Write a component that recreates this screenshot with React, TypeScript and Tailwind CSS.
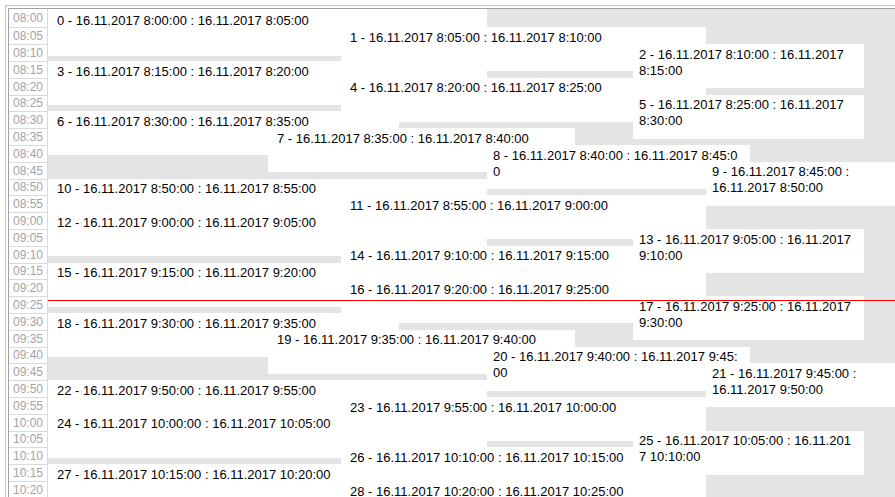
import React from "react";

const ROW = 16.8;
const TOP0 = 1.6;

type Col = { left: number; width: number; pl: number; z: number };
const A: Col = { left: 0, width: 439, pl: 9, z: 1 };
const B: Col = { left: 293, width: 365, pl: 9, z: 1 };
const C: Col = { left: 585, width: 231, pl: 6, z: 2 };
const D0: Col = { left: 0, width: 351, pl: 9, z: 1 };
const D1: Col = { left: 220, width: 307, pl: 9, z: 1 };
const D2: Col = { left: 439, width: 263, pl: 6, z: 1 };
const D3: Col = { left: 658, width: 206, pl: 6, z: 1 };

const events: { col: Col; lines: string[] }[] = [
  { col: A, lines: ["0 - 16.11.2017 8:00:00 : 16.11.2017 8:05:00"] },
  { col: B, lines: ["1 - 16.11.2017 8:05:00 : 16.11.2017 8:10:00"] },
  { col: C, lines: ["2 - 16.11.2017 8:10:00 : 16.11.2017", "8:15:00"] },
  { col: A, lines: ["3 - 16.11.2017 8:15:00 : 16.11.2017 8:20:00"] },
  { col: B, lines: ["4 - 16.11.2017 8:20:00 : 16.11.2017 8:25:00"] },
  { col: C, lines: ["5 - 16.11.2017 8:25:00 : 16.11.2017", "8:30:00"] },
  { col: D0, lines: ["6 - 16.11.2017 8:30:00 : 16.11.2017 8:35:00"] },
  { col: D1, lines: ["7 - 16.11.2017 8:35:00 : 16.11.2017 8:40:00"] },
  { col: D2, lines: ["8 - 16.11.2017 8:40:00 : 16.11.2017 8:45:0", "0"] },
  { col: D3, lines: ["9 - 16.11.2017 8:45:00 :", "16.11.2017 8:50:00"] },
  { col: A, lines: ["10 - 16.11.2017 8:50:00 : 16.11.2017 8:55:00"] },
  { col: B, lines: ["11 - 16.11.2017 8:55:00 : 16.11.2017 9:00:00"] },
  { col: A, lines: ["12 - 16.11.2017 9:00:00 : 16.11.2017 9:05:00"] },
  { col: C, lines: ["13 - 16.11.2017 9:05:00 : 16.11.2017", "9:10:00"] },
  { col: B, lines: ["14 - 16.11.2017 9:10:00 : 16.11.2017 9:15:00"] },
  { col: A, lines: ["15 - 16.11.2017 9:15:00 : 16.11.2017 9:20:00"] },
  { col: B, lines: ["16 - 16.11.2017 9:20:00 : 16.11.2017 9:25:00"] },
  { col: C, lines: ["17 - 16.11.2017 9:25:00 : 16.11.2017", "9:30:00"] },
  { col: D0, lines: ["18 - 16.11.2017 9:30:00 : 16.11.2017 9:35:00"] },
  { col: D1, lines: ["19 - 16.11.2017 9:35:00 : 16.11.2017 9:40:00"] },
  { col: D2, lines: ["20 - 16.11.2017 9:40:00 : 16.11.2017 9:45:", "00"] },
  { col: D3, lines: ["21 - 16.11.2017 9:45:00 :", "16.11.2017 9:50:00"] },
  { col: A, lines: ["22 - 16.11.2017 9:50:00 : 16.11.2017 9:55:00"] },
  { col: B, lines: ["23 - 16.11.2017 9:55:00 : 16.11.2017 10:00:00"] },
  { col: A, lines: ["24 - 16.11.2017 10:00:00 : 16.11.2017 10:05:00"] },
  { col: C, lines: ["25 - 16.11.2017 10:05:00 : 16.11.201", "7 10:10:00"] },
  { col: B, lines: ["26 - 16.11.2017 10:10:00 : 16.11.2017 10:15:00"] },
  { col: A, lines: ["27 - 16.11.2017 10:15:00 : 16.11.2017 10:20:00"] },
  { col: B, lines: ["28 - 16.11.2017 10:20:00 : 16.11.2017 10:25:00"] },
];

const times: string[] = [];
for (let m = 8 * 60; m <= 10 * 60 + 20; m += 5) {
  const h = Math.floor(m / 60);
  const mm = m % 60;
  times.push(`${String(h).padStart(2, "0")}:${String(mm).padStart(2, "0")}`);
}

export default function App() {
  return (
    <div className="relative h-[497px] w-[895px] overflow-hidden bg-white font-['Liberation_Sans',Arial,sans-serif]">
      <div className="ml-[5px] mt-[5px] h-[600px] w-[1000px] border-l border-t border-[#f2c037] pl-[2px] pt-[2px]">
        <div className="flex h-full border-l border-t border-[#a0a0a0]">
          <div className="flex w-[39px] flex-col border-r border-[#dadada] bg-white">
            {times.map((t, i) => (
              <div
                key={t}
                className={
                  i === 0
                    ? "flex h-[18.4px] shrink-0 items-center justify-center text-[12px] text-[#a3a3a3]"
                    : "flex h-[16.8px] shrink-0 items-center justify-center border-t border-[#dadada] text-[12px] text-[#a3a3a3]"
                }
              >
                {t}
              </div>
            ))}
          </div>
          <div className="relative flex-1 bg-[#e4e4e4]">
            {events.map((e, i) => {
              const top = i === 0 ? 0 : TOP0 + ROW * i;
              const height = i === 0 ? 47 : 44;
              return (
                <div
                  key={i}
                  className="absolute overflow-hidden whitespace-nowrap bg-white text-[13px] leading-4 text-black"
                  style={{
                    top,
                    left: e.col.left,
                    width: e.col.width,
                    height,
                    zIndex: e.col.z,
                    paddingLeft: e.col.pl,
                    paddingTop: i === 0 ? 4 : 2.5,
                  }}
                >
                  {e.lines.map((l, j) => (
                    <div key={j}>{l}</div>
                  ))}
                </div>
              );
            })}
            <div className="absolute left-0 right-0 top-[291px] z-10 h-px bg-[#ff0000]" />
          </div>
        </div>
      </div>
    </div>
  );
}
